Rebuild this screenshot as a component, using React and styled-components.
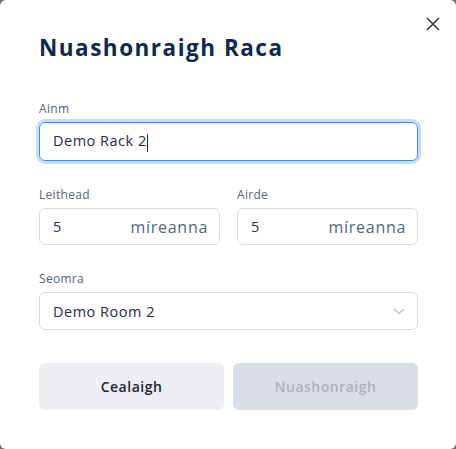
import React from 'react';
import styled, { createGlobalStyle } from 'styled-components';

const Global = createGlobalStyle`
    html, body {
        margin: 0;
        padding: 0;
        background: #6f6f6f;
    }
    * {
        box-sizing: border-box;
    }
`

const Modal = styled.div`
    position: relative;
    width: 456px;
    height: 449px;
    background: #ffffff;
    border-radius: 6px;
    padding: 33px 38px 0 39px;
    display: flex;
    flex-direction: column;
    font-family: "Open Sans", "DejaVu Sans", sans-serif;
`

const Close = styled.button`
    position: absolute;
    top: 14px;
    right: 13px;
    width: 20px;
    height: 20px;
    padding: 0;
    border: none;
    background: none;
    color: #3a3a3a;
    display: flex;
    align-items: center;
    justify-content: center;
`

const Title = styled.h1`
    margin: 0 0 38px;
    font-size: 22.5px;
    font-weight: 700;
    color: #0e2950;
    letter-spacing: 1.5px;
    line-height: 30px;
`

const Field = styled.div`
    display: flex;
    flex-direction: column;
    gap: 5px;
    margin-bottom: 26px;
`

const Label = styled.label`
    font-size: 12px;
    color: #56657d;
    line-height: 16px;
    font-weight: 500;
    letter-spacing: 0.3px;
`

const Box = styled.div`
    height: ${p => p.$h || 38}px;
    border: 1px solid ${p => p.$focus ? '#3a8ef2' : '#d8dce2'};
    box-shadow: ${p => p.$focus ? '0 0 0 3px #c3dffc' : 'none'};
    border-radius: 6px;
    display: flex;
    align-items: center;
    justify-content: space-between;
    padding: 0 11px 0 13px;
    font-size: 14.5px;
    letter-spacing: 0.5px;
    color: #1f2c42;
`

const Caret = styled.span`
    display: inline-block;
    width: 1px;
    height: 18px;
    background: #1f2c42;
    vertical-align: middle;
`

const Unit = styled.span`
    color: #56657d;
    font-size: 16px;
    letter-spacing: 0.7px;
`

const Row = styled.div`
    display: grid;
    grid-template-columns: 1fr 1fr;
    gap: 17px;
`

const Buttons = styled.div`
    display: grid;
    grid-template-columns: 1fr 1fr;
    gap: 9px;
    margin-top: 7px;
`

const Button = styled.button`
    height: 47px;
    border: none;
    border-radius: 6px;
    font-family: inherit;
    font-size: 14px;
    font-weight: 600;
    letter-spacing: 0.5px;
    background: ${p => p.$disabled ? '#d9dee4' : '#eceef2'};
    color: ${p => p.$disabled ? '#aeb3b9' : '#1c2533'};
`

const App = () => {
    return (
        <>
            <Global />
            <Modal>
                <Close>
                    <svg width="16" height="16" viewBox="0 0 16 16">
                        <path d="M2 2 L14 14 M14 2 L2 14" stroke="currentColor" strokeWidth="1.6" fill="none" />
                    </svg>
                </Close>
                <Title>Nuashonraigh Raca</Title>
                <Field>
                    <Label>Ainm</Label>
                    <Box $focus $h={39}>
                        <span>Demo Rack 2<Caret /></span>
                    </Box>
                </Field>
                <Row>
                    <Field>
                        <Label>Leithead</Label>
                        <Box $h={37}>
                            <span>5</span>
                            <Unit>míreanna</Unit>
                        </Box>
                    </Field>
                    <Field>
                        <Label>Airde</Label>
                        <Box $h={37}>
                            <span>5</span>
                            <Unit>míreanna</Unit>
                        </Box>
                    </Field>
                </Row>
                <Field>
                    <Label>Seomra</Label>
                    <Box $h={38}>
                        <span>Demo Room 2</span>
                        <svg width="14" height="14" viewBox="0 0 14 14">
                            <path d="M2 5 L7 9.5 L12 5" stroke="#b9bfc8" strokeWidth="1.3" fill="none" />
                        </svg>
                    </Box>
                </Field>
                <Buttons>
                    <Button>Cealaigh</Button>
                    <Button $disabled>Nuashonraigh</Button>
                </Buttons>
            </Modal>
        </>
    );
}

export default App;
